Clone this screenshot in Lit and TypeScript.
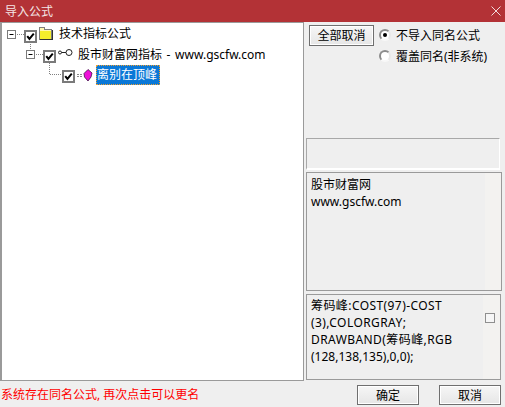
import { LitElement, html, css, svg } from "lit";
import { customElement } from "lit/decorators.js";

const check = svg`<path d="M1.5 5 L4.2 8.5 L9.5 2" fill="none" stroke="#000" stroke-width="2.4"/>`;

@customElement("app-root")
export class AppRoot extends LitElement {
  static styles = css`
    :host { display: block; width: 505px; height: 407px; background: #efefef; overflow: hidden;
      font-family: "Noto Sans", "Noto Sans CJK SC", sans-serif; font-size: 12px; color: #000; line-height: 17px; }
    * { box-sizing: border-box; }
    .title { height: 22px; background: #b33236; color: #f4e6e6; display: flex; align-items: center; justify-content: space-between; padding: 0 4px 0 5px; }
    .title svg { display: block; }
    .main { display: flex; height: 358px; }
    .tree { position: relative; width: 304px; height: 359px; background: #fff; border: 1px solid #9a9a9a; border-left-width: 2px; padding-top: 2px; }
    .lines { position: absolute; left: -2px; top: -23px; }
    .row { display: flex; align-items: flex-start; height: 20px; position: relative; white-space: nowrap; }
    .r1 { padding-left: 22px; }
    .r2 { padding-left: 41px; }
    .r3 { padding-left: 60px; }
    .chk { width: 13px; height: 13px; border: 2px solid #7a7a7a; background: #fff; flex: none; margin-top: 5px; display: block; }
    .chk svg { display: block; }
    .folder { margin: 1px 0 0 1px; flex: none; }
    .label { margin-left: 5px; line-height: 17px; }
    .label.mid { word-spacing: 1.5px; padding-top: 1px; }
    .key { margin: 3px 0 0 2px; flex: none; }
    .leaf { margin: 4px 0 0 2px; flex: none; }
    .sel { margin: 0 0 0 2px; width: 64px; height: 20px; background: #0a78d7; color: #fff; outline: 1px dotted #f0a030; outline-offset: -1px; padding-left: 1px; line-height: 19px; }
    .side { flex: 1; padding: 3px 3px 0 2px; display: flex; flex-direction: column; }
    .top { display: flex; gap: 6px; height: 113px; padding-left: 3px; }
    .btn { border: 1px solid #6f6f6f; background: linear-gradient(#f6f6f6, #e6e6e6); box-shadow: inset 0 0 0 1px #fff; display: flex; align-items: center; justify-content: center; font: inherit; padding: 0; color: #000; }
    .all { width: 65px; height: 21px; flex: none; }
    .opts { display: flex; flex-direction: column; gap: 3px; padding-top: 1px; }
    .opt { display: flex; align-items: center; gap: 5px; height: 18px; white-space: nowrap; }
    .radio { width: 12px; height: 12px; margin-left: -1px; border-radius: 50%; background: #fff; border: 2px solid; border-color: #8c8c8c #e8e8e8 #f8f8f8 #8c8c8c; display: flex; align-items: center; justify-content: center; flex: none; }
    .radio.on::after { content: ""; width: 4px; height: 4px; background: #000; border-radius: 50%; }
    .blank { height: 32px; width: 194px; margin-bottom: 2px; border: 1px solid #a8a8a8; border-right-color: #fff; border-bottom: 2px solid #fff; }
    .box { border: 1px solid #9a9a9a; display: flex; width: 196px; }
    .desc { height: 119px; background: linear-gradient(90deg, #efefef 178px, #f3f2f0 178px); padding: 3px 4px; margin-bottom: 3px; }
    .code { height: 86px; width: 195px; align-items: flex-start; padding: 2px 4px; justify-content: space-between; background: linear-gradient(90deg, #efefef 176px, #f3f2f0 176px); }
    .code p, .desc p { margin: 0; }
    .code p { width: 170px; white-space: nowrap; }
    .wide { letter-spacing: .42px; }
    .mini { width: 10px; height: 10px; border: 1px solid #8f8f8f; background: #f6f6f6; margin: 16px 1px 0 0; flex: none; }
    .foot { height: 27px; display: flex; align-items: center; justify-content: space-between; padding: 0 4px 0 1px; }
    .warn { color: #f00; padding-top: 1px; }
    .actions { display: flex; gap: 20px; padding-top: 3px; }
    .actions .btn { width: 62px; height: 20px; }
  `;

  render() {
    return html`
      <div class="title"><span>导入公式</span>
        <svg width="10" height="10" viewBox="0 0 10 10"><path d="M.5.5l9 9M9.5.5l-9 9" stroke="#f1dcdc" fill="none"/></svg>
      </div>
      <div class="main">
        <div class="tree">
          <svg class="lines" width="120" height="90">
            <g fill="none" stroke="#808080" stroke-dasharray="1 1">
              <path d="M17 34.5h7M30.5 44v6M36 54.5h7M49.5 63v11.5h13"/>
            </g>
            <g fill="#fff" stroke="#7a7a7a">
              <rect x="7.5" y="30.5" width="8" height="8"/><rect x="26.5" y="50.5" width="8" height="8"/>
            </g>
            <path d="M9.5 34.5h4M28.5 54.5h4" stroke="#000"/>
          </svg>
          <div class="row r1">
            <span class="chk"><svg width="9" height="9" viewBox="0 0 11 11">${check}</svg></span>
            <svg class="folder" width="16" height="14" viewBox="0 0 16 14" shape-rendering="crispEdges">
              <path d="M1.500 13.500V1.500h5v2h7v10z" fill="#fff8b0" stroke="#7f7f7f"/>
              <rect x="2" y="5" width="11" height="8" fill="#f4ee2c"/>
              <path d="M14.500 4v10M2 13.500h13" stroke="#333" fill="none"/>
            </svg>
            <span class="label">技术指标公式</span>
          </div>
          <div class="row r2">
            <span class="chk"><svg width="9" height="9" viewBox="0 0 11 11">${check}</svg></span>
            <svg class="key" width="15" height="9" viewBox="0 0 15 9"><circle cx="2" cy="4.5" r="1.5" fill="#fff" stroke="#222"/><path d="M3.5 4.5h5" stroke="#222" fill="none"/><circle cx="11" cy="4.5" r="3" fill="#fff" stroke="#222"/></svg>
            <span class="label mid">股市财富网指标 - www.gscfw.com</span>
          </div>
          <div class="row r3">
            <span class="chk"><svg width="9" height="9" viewBox="0 0 11 11">${check}</svg></span>
            <svg class="leaf" width="17" height="13" viewBox="0 0 17 13"><path d="M0 5.5h6M0 7.5h6" stroke="#888" stroke-dasharray="2 1"/><path d="M11 .5l4 3.500-1 4-3 4-3.500-4-.5-3.500z" fill="#ee10d8" stroke="#40104a" stroke-width=".8"/></svg>
            <span class="sel">离别在顶峰</span>
          </div>
        </div>
        <div class="side">
          <div class="top">
            <button class="btn all">全部取消</button>
            <div class="opts">
              <div class="opt"><span class="radio on"></span>不导入同名公式</div>
              <div class="opt"><span class="radio"></span>覆盖同名(非系统)</div>
            </div>
          </div>
          <div class="blank"></div>
          <div class="box desc"><p>股市财富网<br />www.gscfw.com</p></div>
          <div class="box code"><p><span class="wide">筹码峰:COST(97)-COST</span><br /><span class="wide">(3),COLORGRAY;</span><br /><span class="wide">DRAWBAND(筹码峰,RGB</span><br />(128,138,135),0,0);</p><span class="mini"></span></div>
        </div>
      </div>
      <div class="foot">
        <span class="warn">系统存在同名公式, 再次点击可以更名</span>
        <div class="actions"><button class="btn">确定</button><button class="btn">取消</button></div>
      </div>
    `;
  }
}
